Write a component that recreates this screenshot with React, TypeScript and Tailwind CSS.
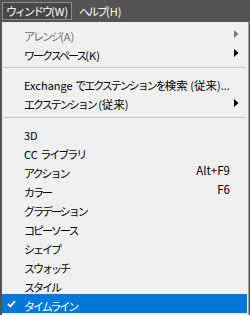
const font = { fontFamily: '"Noto Sans CJK JP", "Noto Sans", sans-serif' };

type Item = {
  label: string;
  disabled?: boolean;
  submenu?: boolean;
  shortcut?: string;
  checked?: boolean;
};

// split into kana / kanji / latin runs so kana can be narrowed like Meiryo UI
const Txt = ({ text }: { text: string }) => {
  const runs = text.match(/[\u3040-\u30ff]+|[\u4e00-\u9fff]+|[^\u3040-\u30ff\u4e00-\u9fff]+/g) ?? [];
  return (
    <>
      {runs.map((r, i) =>
        /[\u3040-\u30ff]/.test(r) ? (
          <span key={i} className="text-[11px] tracking-[-2px]">
            {r}
          </span>
        ) : /[\u4e00-\u9fff]/.test(r) ? (
          <span key={i} className="text-[11.5px]">
            {r}
          </span>
        ) : (
          <span key={i} className="text-[11px]">
            {r}
          </span>
        )
      )}
    </>
  );
};

const Arrow = ({ color }: { color: string }) => (
  <svg width="5" height="8" viewBox="0 0 5 8" className="absolute right-[8px] top-[6px]">
    <path d="M0 0 L4.5 4 L0 8 Z" fill={color} />
  </svg>
);

const Row = ({ item }: { item: Item }) => (
  <div
    className={`relative h-[19px] flex items-center pl-[22px] pr-[17px] leading-none ${
      item.checked ? 'bg-[#0078d7] text-white' : item.disabled ? 'text-[#6d6d6d]' : 'text-black'
    }`}
  >
    {item.checked && (
      <svg width="9" height="8" viewBox="0 0 9 8" className="absolute left-[5px] top-[6px]">
        <path d="M1 4 L3.5 6.5 L8 1" stroke="white" strokeWidth="1.8" fill="none" />
      </svg>
    )}
    <span className="flex-1 whitespace-nowrap">
      <Txt text={item.label} />
    </span>
    {item.shortcut && <span className="whitespace-nowrap text-[11.5px]">{item.shortcut}</span>}
    {item.submenu && <Arrow color={item.disabled ? '#7a7a7a' : '#000'} />}
  </div>
);

const Separator = ({ top, bottom }: { top: string; bottom: string }) => (
  <div className={`${top} ${bottom} ml-[1px] mr-[1px] h-px bg-[#c6c6c6]`} />
);

export default function App() {
  const group1: Item[] = [
    { label: 'アレンジ(A)', disabled: true, submenu: true },
    { label: 'ワークスペース(K)', submenu: true },
  ];
  const group2: Item[] = [
    { label: 'Exchange でエクステンションを検索 (従来)...' },
    { label: 'エクステンション (従来)', submenu: true },
  ];
  const group3: Item[] = [
    { label: '3D' },
    { label: 'CC ライブラリ' },
    { label: 'アクション', shortcut: 'Alt+F9' },
    { label: 'カラー', shortcut: 'F6' },
    { label: 'グラデーション' },
    { label: 'コピーソース' },
    { label: 'シェイプ' },
    { label: 'スウォッチ' },
    { label: 'スタイル' },
    { label: 'タイムライン', checked: true },
  ];

  return (
    <div className="w-[250px] h-[315px] bg-[#535353] overflow-hidden" style={font}>
      {/* menu bar */}
      <div className="h-[22px] flex items-start pl-[2px] pt-[2px] text-white leading-none">
        <div className="h-[18px] px-[3px] flex items-center border border-[#8c8c8c] bg-[#474747]">
          <Txt text="ウィンドウ(W)" />
        </div>
        <div className="h-[18px] ml-[7px] flex items-center">
          <Txt text="ヘルプ(H)" />
        </div>
      </div>

      {/* dropdown */}
      <div className="ml-[2px] w-[247px] h-[293px] bg-[#f0f0f0] border-r border-[#a0a0a0] pt-[2px] pr-px">
        {group1.map((it) => (
          <Row key={it.label} item={it} />
        ))}
        <Separator top="mt-[5px]" bottom="mb-[6px]" />
        {group2.map((it) => (
          <Row key={it.label} item={it} />
        ))}
        <Separator top="mt-[5px]" bottom="mb-[5px]" />
        {group3.map((it) => (
          <Row key={it.label} item={it} />
        ))}
      </div>
    </div>
  );
}
